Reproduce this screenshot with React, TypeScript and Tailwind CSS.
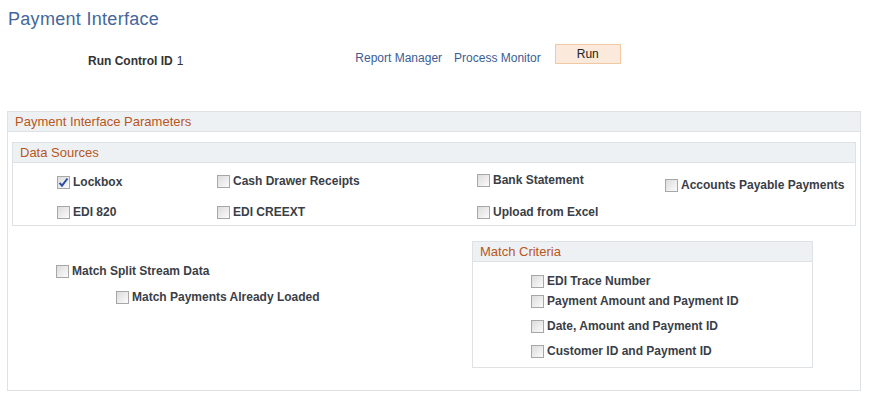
import type { ReactNode } from "react";

function Check({ checked = false }: { checked?: boolean }) {
  return (
    <span className="relative inline-block h-[13px] w-[13px] shrink-0 border border-[#a7a7a7] bg-gradient-to-br from-[#dcdcdc] to-[#fbfbfb]">
      {checked && (
        <svg
          viewBox="0 0 13 13"
          className="absolute left-[-1px] top-[-1px] h-[13px] w-[13px]"
        >
          <path
            d="M2.5 6.8 L5 9.6 L10.5 2.5"
            fill="none"
            stroke="#2c4f9e"
            strokeWidth="2"
          />
        </svg>
      )}
    </span>
  );
}

function Option({
  label,
  checked,
  className = "",
}: {
  label: string;
  checked?: boolean;
  className?: string;
}) {
  return (
    <label className={`flex items-center gap-[3px] self-start ${className}`}>
      <Check checked={checked} />
      <span className="text-[12px] font-bold leading-[14px] text-[#3a3e46]">
        {label}
      </span>
    </label>
  );
}

function GroupHeader({ children }: { children: ReactNode }) {
  return (
    <div className="flex h-[20px] items-center border-b border-[#dfe2e4] bg-[#eef1f3] px-[7px] text-[13px] text-[#b8561d]">
      {children}
    </div>
  );
}

export default function App() {
  return (
    <div className="h-[399px] w-[870px] bg-white font-['Liberation_Sans',Arial,sans-serif]">
      <h1 className="pl-[8px] pt-[8px] text-[18px] leading-[22px] tracking-[0.3px] text-[#44679c]">
        Payment Interface
      </h1>

      <div className="mt-[17px] flex h-[28px] items-center text-[12px]">
        <span className="ml-[88px] font-bold text-[#333]">Run Control ID</span>
        <span className="ml-[4px] text-[#333]">1</span>
        <a className="ml-[172px] -mt-[6px] text-[#3b5d93]">Report Manager</a>
        <a className="ml-[12px] -mt-[6px] text-[#3b5d93]">Process Monitor</a>
        <button className="-mt-[15px] ml-[14px] h-[20px] w-[66px] border border-[#f0c9a2] bg-[#fbeadb] text-[12px] text-[#222]">
          Run
        </button>
      </div>

      <section className="ml-[7px] mr-[9px] mt-[36px] h-[280px] border border-[#dfe2e4]">
        <GroupHeader>Payment Interface Parameters</GroupHeader>

        <div className="mx-[4px] mt-[10px] border border-[#dfe2e4]">
          <GroupHeader>Data Sources</GroupHeader>
          <div className="grid h-[62px] grid-cols-[160px_260px_188px_1fr] grid-rows-[42px_20px] pl-[44px]">
            <Option label="Lockbox" checked className="mt-[12px]" />
            <Option label="Cash Drawer Receipts" className="mt-[11px]" />
            <Option label="Bank Statement" className="mt-[10px]" />
            <Option label="Accounts Payable Payments" className="mt-[15px]" />
            <Option label="EDI 820" />
            <Option label="EDI CREEXT" />
            <Option label="Upload from Excel" />
          </div>
        </div>

        <div className="flex">
          <div className="w-[464px] pl-[48px] pt-[38px]">
            <Option label="Match Split Stream Data" />
            <Option label="Match Payments Already Loaded" className="ml-[60px] mt-[12px]" />
          </div>

          <div className="mt-[15px] h-[127px] w-[341px] border border-[#dfe2e4]">
            <GroupHeader>Match Criteria</GroupHeader>
            <div className="flex flex-col pl-[58px] pt-[12px]">
              <Option label="EDI Trace Number" />
              <Option label="Payment Amount and Payment ID" className="mt-[6px]" />
              <Option label="Date, Amount and Payment ID" className="mt-[11px]" />
              <Option label="Customer ID and Payment ID" className="mt-[11px]" />
            </div>
          </div>
        </div>
      </section>
    </div>
  );
}
